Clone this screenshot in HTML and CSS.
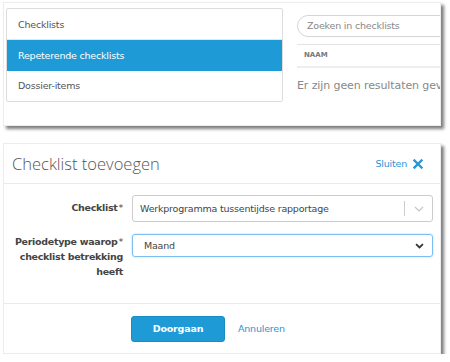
FILE: index.html
```html
<!DOCTYPE html>
<html lang="nl">
<head>
<meta charset="utf-8">
<link rel="stylesheet" href="styles.css">
</head>
<body>
<div class="page">
  <section class="shot shot-top">
    <nav class="nav">
      <div class="nav-item">Checklists</div>
      <div class="nav-item active">Repeterende checklists</div>
      <div class="nav-item">Dossier-items</div>
    </nav>
    <div class="list">
      <div class="search">Zoeken in checklists</div>
      <div class="thead">NAAM</div>
      <div class="empty">Er zijn geen resultaten gevonden</div>
    </div>
  </section>

  <section class="shot shot-modal">
    <header class="modal-head">
      <h1 class="modal-title">Checklist toevoegen</h1>
      <a class="close">Sluiten
        <svg class="close-x" viewBox="0 0 10 10" width="10" height="10"><path d="M1.5 1.5 L8.5 8.5 M8.5 1.5 L1.5 8.5" stroke="#2b95d6" stroke-width="2.4" stroke-linecap="square"/></svg>
      </a>
    </header>
    <div class="modal-body">
      <div class="row">
        <label class="label">Checklist<span class="req">*</span></label>
        <div class="select">
          <span class="select-text">Werkprogramma tussentijdse rapportage</span>
          <span class="sep"></span>
          <svg class="chev" viewBox="0 0 10 6" width="10" height="6"><path d="M1 1 L5 5 L9 1" fill="none" stroke="#c4c4c4" stroke-width="1.2"/></svg>
        </div>
      </div>
      <div class="row">
        <label class="label">Periodetype waarop<span class="req">*</span><br>checklist betrekking<br>heeft</label>
        <div class="select focus">
          <span class="select-text indent">Maand</span>
          <svg class="chev2" viewBox="0 0 10 7" width="9" height="6"><path d="M1 1.2 L5 5.2 L9 1.2" fill="none" stroke="#333" stroke-width="2"/></svg>
        </div>
      </div>
    </div>
    <footer class="modal-foot">
      <button class="btn">Doorgaan</button>
      <a class="cancel">Annuleren</a>
    </footer>
  </section>
</div>
</body>
</html>
```
FILE: styles.css
```css
* { box-sizing: border-box; }
html, body { margin: 0; padding: 0; background: #fff; }
body { font-family: "DejaVu Sans", "Liberation Sans", sans-serif; color: #555; }
.page { display: flex; flex-direction: column; gap: 17px; padding: 2px 0 0 3px; }

.shot {
  width: 438px;
  background: #fff;
  border: 1px solid #ececec;
  box-shadow: 3px 3px 3px rgba(0,0,0,0.5);
  overflow: hidden;
}
.shot-top { height: 124px; display: flex; padding: 5px 0 0 2px; gap: 14px; }

.nav {
  flex: 0 0 277px;
  height: 94px;
  border: 1px solid #ddd;
  border-radius: 2px;
  display: flex; flex-direction: column;
}
.nav-item {
  flex: 1;
  display: flex; align-items: center;
  padding-left: 11px;
  font-size: 9.5px;
  letter-spacing: -0.2px;
  color: #555;
  border-bottom: 1px solid #e6e6e6;
}
.nav-item:last-child { border-bottom: 0; }
.nav-item.active { background: #1e9bd7; color: #fff; border-bottom: 0; }

.list { flex: 1; min-width: 0; padding-top: 7px; white-space: nowrap; }
.search {
  height: 22px;
  width: 200px;
  border: 1px solid #d5d5d5;
  border-radius: 11px 0 0 11px;
  font-size: 9.5px; letter-spacing: -0.2px;
  color: #888;
  padding: 4px 0 0 9px;
}
.thead {
  margin-top: 7px;
  border-top: 1px solid #e4e4e4;
  border-bottom: 2px solid #eee;
  height: 24px;
  padding: 6px 0 0 7px;
  font-size: 7px; font-weight: bold; color: #777;
}
.empty { font-size: 11px; color: #888; padding-top: 11px; letter-spacing: -0.1px; }

.shot-modal { height: 211px; display: flex; flex-direction: column; }
.modal-head {
  height: 40px;
  border-bottom: 1px solid #eaeaea;
  display: flex; align-items: center; justify-content: space-between;
  padding: 0 17px 0 8px;
}
.modal-title {
  margin: 0;
  font-family: "Open Sans", sans-serif;
  font-weight: 300;
  font-size: 16.5px;
  color: #555;
}
.close { color: #2b95d6; font-size: 9.5px; display: flex; align-items: center; gap: 6px; letter-spacing: -0.2px; }
.close-x { display: block; }

.modal-body { flex: 1; padding-top: 11px; display: flex; flex-direction: column; gap: 12px; }
.row { display: flex; gap: 9px; align-items: flex-start; }
.label {
  width: 119px;
  text-align: right;
  font-size: 9.5px; font-weight: bold; color: #444;
  line-height: 15px;
  letter-spacing: -0.3px;
}
.row:first-child .label { padding-top: 5px; }
.req { font-weight: normal; margin-left: 1px; }
.select {
  width: 301px; height: 27px;
  border: 1px solid #ccc; border-radius: 3px;
  display: flex; align-items: center;
  padding-left: 7px;
  font-size: 9.5px; color: #444; letter-spacing: -0.2px;
  white-space: nowrap;
}
.select-text { flex: 1; }
.sep { width: 1px; height: 15px; background: #ccc; margin-right: 9px; }
.chev { margin-right: 8px; }
.select.focus { height: 23px; border-color: #7fbff0; box-shadow: 0 0 2px rgba(80,160,230,0.5); }
.indent { padding-left: 4px; }
.chev2 { margin-right: 8px; }

.modal-foot {
  height: 50px;
  border-top: 1px solid #eaeaea;
  display: flex; align-items: center; gap: 13px;
  padding-left: 127px;
}
.btn {
  width: 94px; height: 26px;
  background: #1e9bd7; color: #fff;
  border: 1px solid #1a8cc4; border-radius: 3px;
  font-family: inherit; font-size: 9.5px; font-weight: bold; letter-spacing: -0.2px;
}
.cancel { color: #2b95d6; font-size: 9.5px; letter-spacing: -0.2px; }
```
